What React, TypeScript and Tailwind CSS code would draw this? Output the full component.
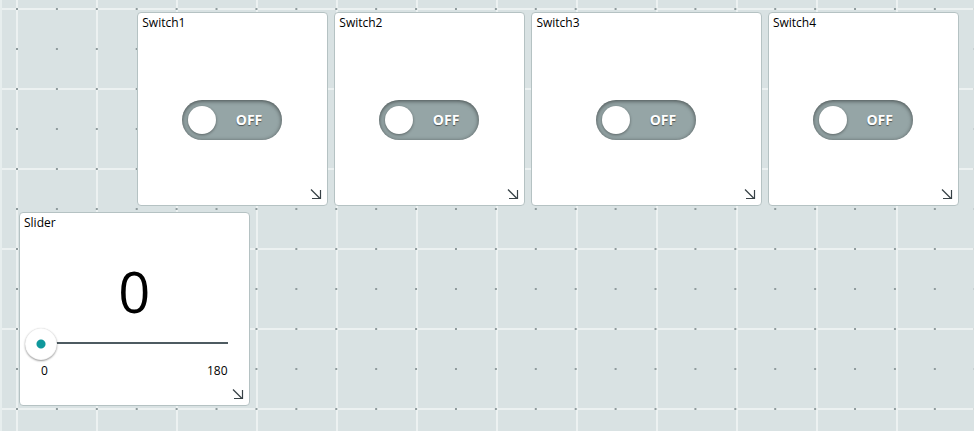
import { useState } from 'react';

function ResizeHandle({ name }: { name: string }) {
  return (
    <button type="button" aria-label={`Resize ${name}`} className="absolute bottom-1 right-1 cursor-se-resize">
      <svg width="14" height="14" viewBox="0 0 14 14" fill="none" stroke="#374146" className="block">
        <path d="M2 2.5 L11 11.5" strokeWidth="1.3" />
        <path d="M11.5 3 V11.5 H3" strokeWidth="1.2" />
      </svg>
    </button>
  );
}

function Switch({ name }: { name: string }) {
  const [on, setOn] = useState(false);
  return (
    <button
      type="button"
      role="switch"
      aria-checked={on}
      aria-label={name}
      onClick={() => setOn(!on)}
      className={`flex h-10 w-[100px] items-center justify-between rounded-full px-[6px] shadow-[inset_0_1px_4px_rgba(0,0,0,0.55)] ${
        on ? 'flex-row-reverse bg-[#00979d]' : 'bg-[#95a5a6]'
      }`}
    >
      <span className="size-7 rounded-full bg-white shadow-[0_1px_3px_rgba(0,0,0,0.4)]" />
      <span className="pl-3 pr-[14px] text-[14px] font-bold leading-5 text-white [text-shadow:0_1px_1px_rgba(0,0,0,0.5)]">
        {on ? 'ON' : 'OFF'}
      </span>
    </button>
  );
}

function SwitchCard({ name, className }: { name: string; className: string }) {
  return (
    <section className={`relative row-span-5 flex flex-col rounded border border-[#b5c2c3] bg-white ${className}`}>
      <h2 className="h-5 px-1 text-[12px] leading-5">{name}</h2>
      <div className="flex flex-1 justify-center pr-px pt-[67px]">
        <Switch name={name} />
      </div>
      <ResizeHandle name={name} />
    </section>
  );
}

function SliderCard() {
  const [value, setValue] = useState(0);
  return (
    <section className="relative col-span-6 row-span-5 flex flex-col rounded border border-[#b5c2c3] bg-white">
      <h2 className="h-5 px-1 text-[12px] leading-5">
        <label htmlFor="slider">Slider</label>
      </h2>
      <output htmlFor="slider" className="pb-px pt-[22px] text-center text-[56px] leading-[72px]">
        {value}
      </output>
      <input
        id="slider"
        type="range"
        min={0}
        max={180}
        value={value}
        onChange={(e) => setValue(Number(e.target.value))}
        className="mx-[5px] h-8 appearance-none bg-[linear-gradient(#4e5b61,#4e5b61)] bg-[length:calc(100%-32px)_2px] bg-[position:16px_14px] bg-no-repeat outline-none [&::-webkit-slider-thumb]:size-8 [&::-webkit-slider-thumb]:appearance-none [&::-webkit-slider-thumb]:rounded-full [&::-webkit-slider-thumb]:bg-white [&::-webkit-slider-thumb]:bg-[radial-gradient(circle,#0f989c_4px,#fff_5px)] [&::-webkit-slider-thumb]:shadow-[0_1px_2px_rgba(0,0,0,0.4),inset_0_0_1px_rgba(0,0,0,0.3)]"
      />
      <div className="flex justify-between px-[21px] pt-px text-[12px] leading-5">
        <span>0</span>
        <span>180</span>
      </div>
      <ResizeHandle name="Slider" />
    </section>
  );
}

export default function App() {
  return (
    <main className="relative min-h-screen border-l-2 border-[#e7eeee] bg-[#d9e2e3] bg-[linear-gradient(#ecf1f1_2px,transparent_2px),linear-gradient(90deg,#ecf1f1_2px,transparent_2px)] bg-[size:80px_80px] bg-[position:14px_8px] font-['Open_Sans','Noto_Sans',sans-serif] text-black">
      <div className="absolute bottom-0 left-[14px] right-0 top-2 bg-[conic-gradient(from_270deg_at_2px_2px,#8f9b9d_90deg,transparent_0)] bg-[size:40px_40px] [background-repeat:round_repeat]" />
      <div className="relative grid auto-rows-[34px] grid-cols-[repeat(24,minmax(0,1fr))] gap-[6px] py-3 pl-[17px] pr-[15px]">
        <SwitchCard name="Switch1" className="col-span-5 col-start-4" />
        <SwitchCard name="Switch2" className="col-span-5" />
        <SwitchCard name="Switch3" className="col-span-6" />
        <SwitchCard name="Switch4" className="col-span-5" />
        <SliderCard />
      </div>
    </main>
  );
}
